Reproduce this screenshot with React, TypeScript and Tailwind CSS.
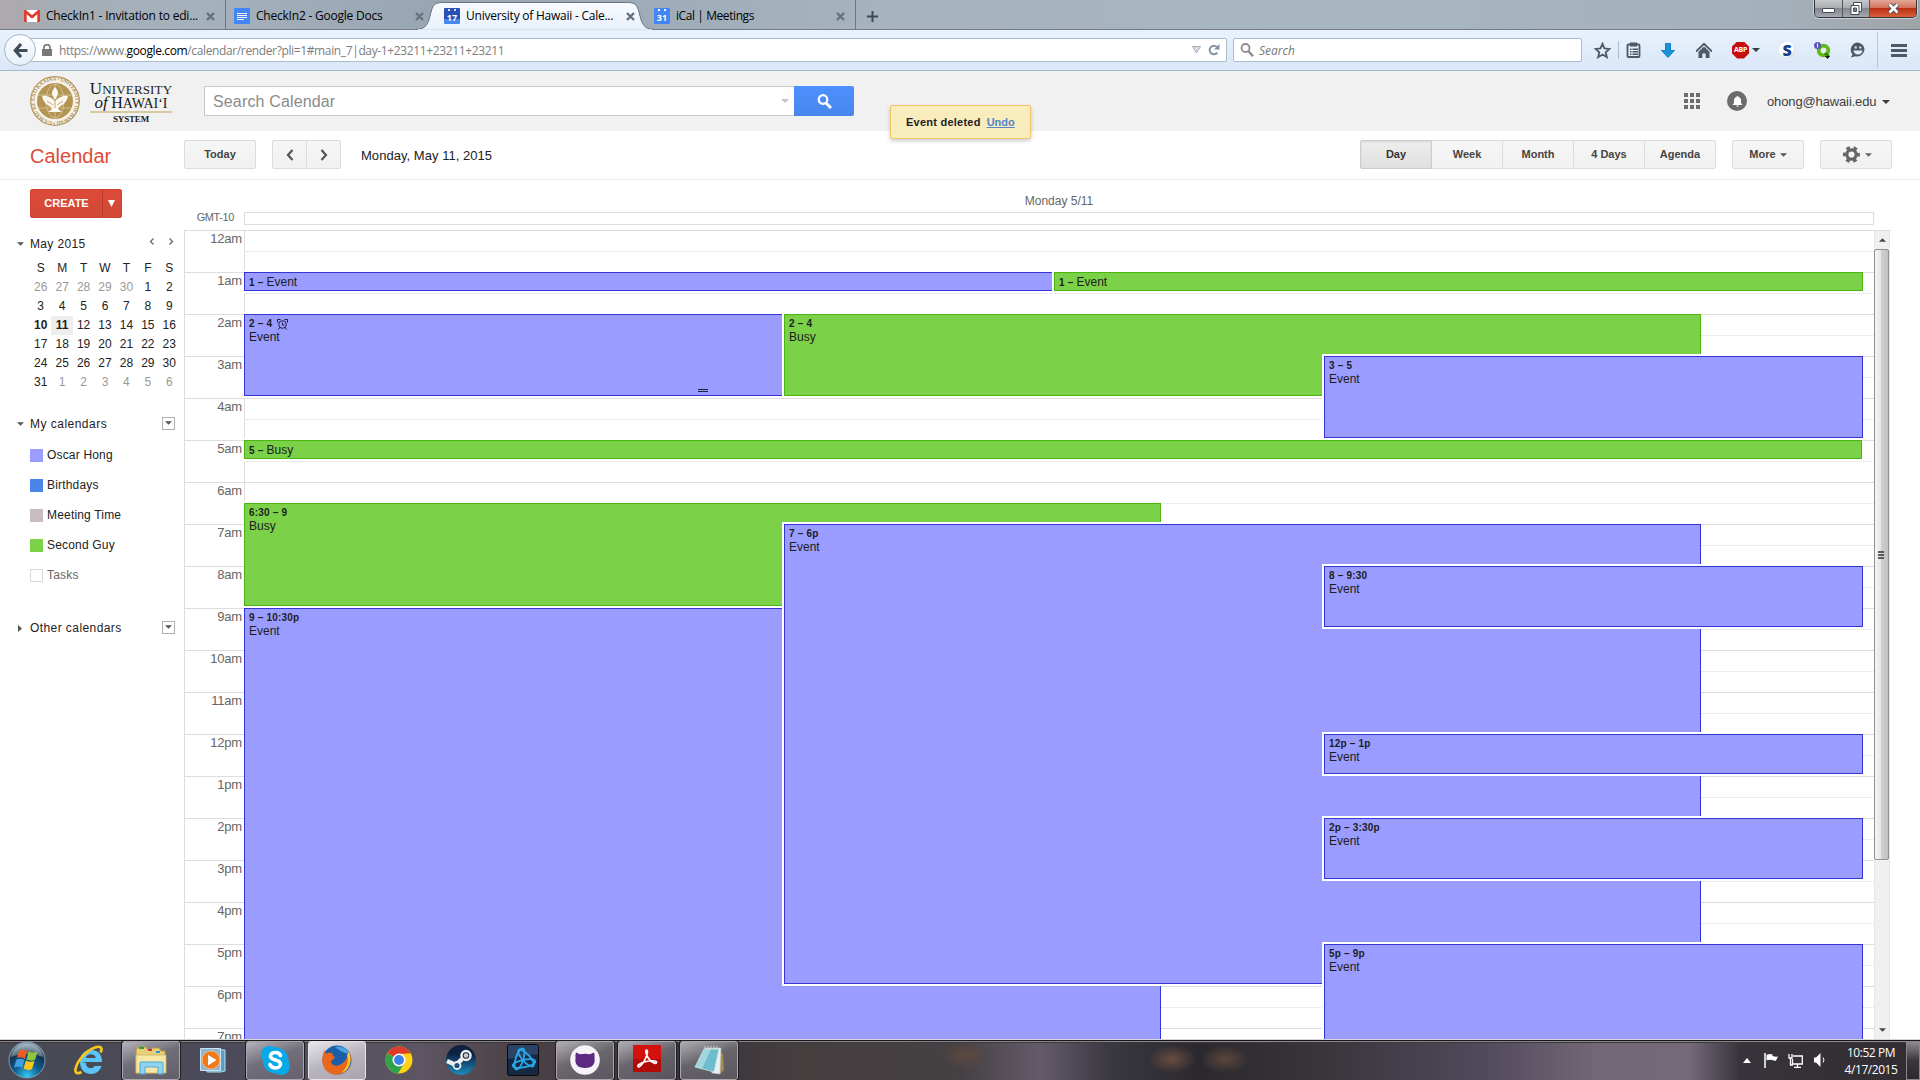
import React from "react";

const HOURS = [
  "12am", "1am", "2am", "3am", "4am", "5am", "6am", "7am", "8am", "9am",
  "10am", "11am", "12pm", "1pm", "2pm", "3pm", "4pm", "5pm", "6pm", "7pm",
];

type Ev = {
  x: number; w: number; start: number; end: number; time: string; title: string;
  green?: boolean; inline?: boolean; alarm?: boolean; grip?: boolean;
};

const EVENTS: Ev[] = [
  { x: 0, w: 809, start: 1, end: 1.5, time: "1 –", title: "Event", inline: true },
  { x: 808, w: 811, start: 1, end: 1.5, time: "1 –", title: "Event", inline: true, green: true },
  { x: 0, w: 539, start: 2, end: 4, time: "2 – 4", title: "Event", alarm: true, grip: true },
  { x: 538, w: 919, start: 2, end: 4, time: "2 – 4", title: "Busy", green: true },
  { x: 1078, w: 541, start: 3, end: 5, time: "3 – 5", title: "Event" },
  { x: 0, w: 1618, start: 5, end: 5.5, time: "5 –", title: "Busy", inline: true, green: true },
  { x: 0, w: 917, start: 6.5, end: 9, time: "6:30 – 9", title: "Busy", green: true },
  { x: 0, w: 917, start: 9, end: 22.5, time: "9 – 10:30p", title: "Event" },
  { x: 538, w: 919, start: 7, end: 18, time: "7 – 6p", title: "Event" },
  { x: 1078, w: 541, start: 8, end: 9.5, time: "8 – 9:30", title: "Event" },
  { x: 1078, w: 541, start: 12, end: 13, time: "12p – 1p", title: "Event" },
  { x: 1078, w: 541, start: 14, end: 15.5, time: "2p – 3:30p", title: "Event" },
  { x: 1078, w: 541, start: 17, end: 21, time: "5p – 9p", title: "Event" },
];

function EventBox({ e }: { e: Ev }) {
  return (
    <div
      className={"absolute border-y-2 border-white " + (e.x > 0 ? "border-l-2" : "")}
      style={{ left: e.x, width: e.w, top: e.start * 42 - 2, height: (e.end - e.start) * 42 + 2 }}
    >
      <div
        className={
          "relative h-full border pl-1 text-[12px] text-[#1d1d1d] " +
          (e.green ? "border-[#4cb610] bg-[#7bd148] " : "border-[#3535dc] bg-[#9a9cff] ") +
          (e.inline ? "pt-0.5" : "pt-0.5")
        }
      >
        {e.inline ? (
          <div className="flex h-[14px] items-center gap-[3px] whitespace-nowrap">
            <span className="pt-px text-[10px] font-bold tracking-[0.2px]">{e.time}</span>
            <span>{e.title}</span>
          </div>
        ) : (
          <>
            <div className="mb-px flex h-[13px] items-center whitespace-nowrap text-[10px] font-bold tracking-[0.2px]">
              {e.time}
              {e.alarm && (
                <svg className="mt-px ml-[5px] size-[11px]" viewBox="0 0 11 11" fill="none" stroke="#1d1d3d">
                  <circle cx="5.500" cy="5.500" r="3.800" />
                  <path d="M5.500 3.500v2.500h2M.5 3.500v-3h3M10.500 3.500v-3h-3M2.800 8.500l-1.500 2M8.200 8.500l1.500 2" />
                </svg>
              )}
            </div>
            <div className="h-[13px] leading-[13px]">{e.title}</div>
          </>
        )}
        {e.grip && <div className="absolute bottom-[3px] left-[453px] h-[3px] w-2.5 border-y border-[#1d1d3d]" />}
      </div>
    </div>
  );
}

function CloseX() {
  return (
    <svg className="size-[9px]" viewBox="0 0 9 9" stroke="#66717c" strokeWidth="2.4">
      <path d="M1 1l7 7M8 1L1 8" />
    </svg>
  );
}

function Caret({ className = "" }: { className?: string }) {
  return (
    <svg className={"h-1 w-2 " + className} viewBox="0 0 8 4" fill="currentColor">
      <path d="M0 0h8L4 4z" />
    </svg>
  );
}

function CalFav({ n, dark }: { n: string; dark?: boolean }) {
  return (
    <div
      className={
        "relative flex size-4 items-center justify-center rounded-[1px] pt-[3px] text-[9px] leading-[11px] font-bold text-white " +
        (dark ? "bg-[linear-gradient(#2a52b4_70%,#4787ee_70%)]" : "bg-[#4285f4]")
      }
    >
      <div className={"absolute inset-x-1 top-px flex justify-between " + (dark ? "text-[#d8dce8]" : "text-white")}>
        <i className="h-0.5 w-0.5 bg-current" />
        <i className="h-0.5 w-0.5 bg-current" />
      </div>
      {n}
    </div>
  );
}

function TabStrip() {
  return (
    <div className="relative flex h-[30px] items-stretch border-b border-[#727d88] bg-[linear-gradient(90deg,#b0a8ac_0,#a3adb5_60px,#a5b1bd_200px,#98a5b2_440px,#a7b4c0_900px,#a8b6c2_1400px,#a4b0ba_1780px,#9fa4a8_1920px)] text-[12px] text-black [font-family:'Open_Sans',sans-serif]">
      <div className="flex w-[226px] items-center border-r border-[#6d7781] pt-[3px] pl-6">
        <svg className="h-3 w-4" viewBox="0 0 16 12">
          <path fill="#fff" d="M1 0h14v12H1z" />
          <path fill="none" stroke="#e0392b" strokeWidth="2.6" d="M1.4 12V1.3L8 7l6.600-5.700V12" />
        </svg>
        <span className="ml-1.5 w-[152px] whitespace-nowrap tracking-[-0.2px]">CheckIn1 - Invitation to edi...</span>
        <span className="ml-[8px]"><CloseX /></span>
      </div>
      <div className="flex w-[210px] items-center pt-[3px] pl-[8px]">
        <div className="flex size-4 flex-col justify-center gap-px rounded-[1px] bg-[#4285f4] px-[3px]">
          <i className="h-px bg-white" /><i className="h-px bg-white" /><i className="h-px bg-white" /><i className="h-px w-[7px] bg-white" />
        </div>
        <span className="ml-1.5 w-[152px] whitespace-nowrap tracking-[-0.22px]">CheckIn2 - Google Docs</span>
        <span className="ml-[7px]"><CloseX /></span>
      </div>
      <div className="relative flex w-[208px] items-center pt-[3px] pl-[8px]">
        <svg className="absolute top-0 -left-[20px] h-[30px] w-[240px]" viewBox="0 0 240 30">
          <defs>
            <linearGradient id="tab" x1="0" y1="0" x2="0" y2="1">
              <stop offset="0" stopColor="#f8fbff" /><stop offset="1" stopColor="#e9f1fc" />
            </linearGradient>
          </defs>
          <path d="M0 29.500C10 29 12 24 14 16 17 4 18 2.500 28 2.500H210C220 2.500 221 4 224 16 226 24 228 29 238 29.500" fill="url(#tab)" stroke="#68747f" />
          <path d="M2 30h234" stroke="#e9f1fc" strokeWidth="1.500" />
        </svg>
        <div className="relative flex items-center">
          <CalFav n="17" dark />
          <span className="ml-1.5 w-[152px] whitespace-nowrap tracking-[-0.24px]">University of Hawaii - Cale...</span>
          <span className="ml-[8px]"><CloseX /></span>
        </div>
      </div>
      <div className="flex w-[212px] items-center border-r border-[#6d7781] pt-[3px] pl-[10px]">
        <CalFav n="31" />
        <span className="ml-1.5 w-[152px] whitespace-nowrap tracking-[-0.42px]">iCal | Meetings</span>
        <span className="ml-[8px]"><CloseX /></span>
      </div>
      <svg className="mt-[11px] ml-[11px] size-[11px]" viewBox="0 0 11 11" stroke="#3f4a54" strokeWidth="2">
        <path d="M5.500 0v11M0 5.500h11" />
      </svg>
      <div className="absolute top-0 right-[3px] flex h-[18px] overflow-hidden rounded-b-[5px] border border-t-0 border-[#33363a] shadow-[0_0_0_1px_#c9d0d6]">
        <div className="flex w-7 items-center justify-center border-r border-[#55595e] bg-[linear-gradient(#c6c8cb,#a9adb2_45%,#84898f_50%,#a2a8ae)]">
          <i className="mt-[3px] h-[5px] w-[13px] rounded-[1px] border border-[#454a55] bg-white" />
        </div>
        <div className="flex w-[27px] items-center justify-center border-r border-[#55595e] bg-[linear-gradient(#c6c8cb,#a9adb2_45%,#84898f_50%,#a2a8ae)]">
          <svg className="h-[13px] w-[13px]" viewBox="0 0 13 13" fill="#fff" stroke="#454a55">
            <path d="M3.500.5h8v9h-8z" /><path d="M1 3.500h8v9H1z" /><path d="M3.500 6h3v3.500h-3z" fill="#7e848c" />
          </svg>
        </div>
        <div className="flex w-[46px] items-center justify-center bg-[linear-gradient(#e2a799,#d2735c_45%,#bb3015_50%,#d9613a)]">
          <svg className="h-[11px] w-[13px]" viewBox="0 0 13 11">
            <path d="M2.500 1.500l8 8M10.500 1.500l-8 8" stroke="#454a55" strokeWidth="4.500" />
            <path d="M2.500 1.500l8 8M10.500 1.500l-8 8" stroke="#fff" strokeWidth="2.600" />
          </svg>
        </div>
      </div>
    </div>
  );
}

function NavBar() {
  return (
    <div className="relative flex h-[41px] items-center border-b border-[#a3bad0] bg-[linear-gradient(#e9f1fc,#dae7f8)] [font-family:'Open_Sans',sans-serif]">
      <div className="absolute top-1 left-1 z-10 flex size-8 items-center justify-center rounded-full border border-[#a5b5c7] bg-[linear-gradient(#fdfeff,#e6effa)]">
        <svg className="size-[15px]" viewBox="0 0 15 15" fill="none" stroke="#3f4c59" strokeWidth="3.200">
          <path d="M8 1L2.300 7.500 8 14M2.500 7.500H14.500" />
        </svg>
      </div>
      <div className="ml-[22px] flex h-6 w-[1205px] items-center rounded-[2px] border border-[#a9bbcd] bg-white text-[12px]">
        <svg className="ml-[19px] h-3 w-2.5" viewBox="0 0 10 12">
          <path d="M0 5h10v7H0z" fill="#777" />
          <path d="M2 6V3.500a3 2.800 0 0 1 6 0V6" fill="none" stroke="#777" strokeWidth="1.600" />
        </svg>
        <span className="mt-0.5 ml-[7px] text-[#7d7d7d] tracking-[-0.370px] whitespace-nowrap">
          https://www.<span className="text-black">google.com</span>/calendar/render?pli=1#main_7|day-1+23211+23211+23211
        </span>
        <svg className="ml-auto h-2 w-[9px]" viewBox="0 0 9 8"><path d="M.5.5h8L4.500 7z" fill="#d8dee6" stroke="#a4aebb" /></svg>
        <svg className="mr-1.5 ml-[7px] h-3 w-3" viewBox="0 0 12 12">
          <path d="M9.300 8.700A4.300 4.300 0 1 1 9 3" fill="none" stroke="#8493a3" strokeWidth="2" /><path d="M11.500 0v5.500H6z" fill="#8493a3" />
        </svg>
      </div>
      <div className="ml-1.5 flex h-6 w-[349px] items-center rounded-[2px] border border-[#a9bbcd] bg-white text-[12px]">
        <svg className="ml-1.5 size-[14px]" viewBox="0 0 14 14" fill="none" stroke="#8c8c8c">
          <circle cx="5.500" cy="5" r="4" strokeWidth="1.800" /><path d="M8.500 8.200l4.500 5" strokeWidth="2.400" />
        </svg>
        <span className="mt-0.5 ml-[5px] text-[#777] italic">Search</span>
      </div>
      <div className="flex items-center text-[#4d5966]">
        <svg className="ml-[12px] size-[17px]" viewBox="0 0 17 17" fill="none" stroke="currentColor" strokeWidth="1.800">
          <path d="M8.500 1.800l2 4.600 5 .5-3.800 3.300 1.200 5-4.400-2.700-4.400 2.700 1.200-5L1.500 6.900l5-.5z" />
        </svg>
        <i className="ml-[7px] h-[18px] w-px bg-[#a9bbcd]" />
        <svg className="ml-[7px] h-4 w-[15px]" viewBox="0 0 15 16">
          <rect x="1.500" y="2.500" width="12" height="12.500" rx="1" fill="none" stroke="currentColor" strokeWidth="1.800" />
          <path d="M4 .5h7v4H4zM4 6.500h1.500V8H4zM6.500 6.500H12V8H6.500zM4 9h1.500v1.500H4zM6.500 9H12v1.500H6.500zM4 11.500h1.500V13H4zM6.500 11.500H12V13H6.500z" fill="currentColor" />
        </svg>
        <svg className="ml-5 h-[15px] w-[14px]" viewBox="0 0 14 15"><path d="M4.500.5h5v7h4L7 14.500.5 7.500h4z" fill="#1a93db" stroke="#1180c6" /></svg>
        <svg className="ml-[21px] h-[15px] w-4" viewBox="0 0 16 15">
          <path d="M0 8.500L8 .8l8 7.700" fill="none" stroke="currentColor" strokeWidth="1.900" /><path d="M2.500 8.700L8 3.600l5.500 5.100V15H9.700v-4.500H6.300V15H2.500z" fill="currentColor" />
        </svg>
        <div className="ml-5 flex size-[17px] items-center justify-center bg-[#c70d0d] text-[7px] font-bold tracking-[-0.3px] text-white [clip-path:polygon(30%_0,70%_0,100%_30%,100%_70%,70%_100%,30%_100%,0_70%,0_30%)]">ABP</div>
        <Caret className="ml-[3px] text-[#333d47]" />
        <div className="ml-[19px] flex size-4 items-center justify-center rounded-full bg-[radial-gradient(circle_at_40%_40%,#fff_55%,#9ea6ae)] text-[16px] leading-none font-extrabold text-[#173f8a]">S</div>
        <svg className="ml-[19px] h-[17px] w-[17px]" viewBox="0 0 17 17">
          <circle cx="9.500" cy="8.500" r="4.800" fill="none" stroke="#5fb814" strokeWidth="3.800" /><path d="M11 11l4 4" stroke="#3d8208" strokeWidth="3" />
          <circle cx="3.500" cy="3.500" r="3.500" fill="#5a55b5" /><path d="M3.500 1.500v4" stroke="#fff" /><path d="M11 14h5l-2.500 3z" fill="#111" />
        </svg>
        <svg className="ml-[19px] size-4" viewBox="0 0 16 16">
          <path d="M8 .5a7.500 7 0 1 1-2.500 13.800L.8 15.500l1.700-3A7.300 7.300 0 0 1 8 .5z" fill="currentColor" />
          <path d="M4.700 4.500h2v2h-2zM9.300 4.500h2v2h-2zM3.500 8.500h9a4.500 4 0 0 1-9 0z" fill="#e2ecf9" />
        </svg>
        <i className="ml-[11px] h-9 w-px bg-[#b6c7da]" />
        <div className="ml-[13px] flex w-4 flex-col gap-0.5">
          <i className="h-[3px] bg-current" /><i className="h-[3px] bg-current" /><i className="h-[3px] bg-current" />
        </div>
      </div>
    </div>
  );
}

function Seal() {
  return (
    <svg className="size-[50px]" viewBox="0 0 50 50">
      <defs><path id="ring" d="M25 45.500a20.500 20.500 0 1 1 .1 0" /></defs>
      <circle cx="25" cy="25" r="24.300" fill="#f7f3ea" stroke="#b5985a" strokeWidth="1.200" />
      <text fontSize="5.200" fontWeight="bold" fill="#a98a4b" fontFamily="Liberation Serif, serif">
        <textPath href="#ring" textLength="127">• UA MAU KE EA O KA AINA • UNIVERSITY OF HAWAII</textPath>
      </text>
      <circle cx="25" cy="25" r="18" fill="#b39452" />
      <g fill="none" stroke="#e6d9b8" strokeWidth=".6">
        <ellipse cx="25" cy="25" rx="9" ry="17" /><path d="M8 19h34M8 32h34M25 8v34" />
      </g>
      <path d="M12 20c5-1 10 2 13 5 3-3 8-6 13-5-1 6-5 9-9 11l-1 2 4 3H18l4-3-1-2c-4-2-8-5-9-11z" fill="#fbf8f0" />
      <path d="M25 24v8M17 25l6 4M33 25l-6 4" stroke="#b39452" strokeWidth=".8" />
      <path d="M25 11c3 3 4 6 2 9l-1 3h-2l-1-3c-2-3-1-5 2-9z" fill="#fbf8f0" />
    </svg>
  );
}

function Header() {
  return (
    <div className="relative flex h-[60px] items-start bg-[#f1f1f1]">
      <div className="mt-[5px] ml-[30px]"><Seal /></div>
      <div className="mt-[10px] ml-[9px] flex w-[84px] flex-col items-center text-[#1a1a1a] [font-family:'Liberation_Serif',serif]">
        <div className="h-[15px] text-[13px] leading-[15px] tracking-[0.150px] whitespace-nowrap"><span className="text-[17px] leading-[15px]">U</span>NIVERSITY</div>
        <div className="h-[14px] text-[14px] leading-[14px] whitespace-nowrap"><i className="text-[17px] leading-[14px]">of</i> <span className="text-[16px] leading-[14px]">H</span>AWAIʻI</div>
        <div className="mt-px h-[2px] w-[82px] bg-[#d9c9a0]" />
        <div className="text-[9px] leading-[13px] font-bold tracking-[-0.150px]">SYSTEM</div>
      </div>
      <div className="mt-[15px] ml-[31px] flex h-[30px] w-[590px] items-center border border-r-0 border-[#c8c8c8] bg-white pl-2 text-[16px] text-[#8a8a8a]">
        <span className="mt-px tracking-[0.150px]">Search Calendar</span>
        <Caret className="mr-[5px] ml-auto text-[#c4c4c4]" />
      </div>
      <div className="mt-[15px] flex h-[30px] w-[60px] items-center justify-center rounded-r-[2px] bg-[linear-gradient(#4d90fe,#4787ed)]">
        <svg className="size-[15px]" viewBox="0 0 15 15" fill="none" stroke="#fff">
          <circle cx="6" cy="5.500" r="4.300" strokeWidth="2.200" /><path d="M9 9l5 5" strokeWidth="2.800" />
        </svg>
      </div>
      <div className="absolute top-[34px] left-[890px] z-20 flex h-[34px] w-[141px] items-center rounded-[2px] border border-[#f0c36d] bg-[#f9edbe] pl-[15px] text-[11px] font-bold text-[#222] shadow-[0_2px_4px_rgba(0,0,0,0.2)]">
        <span className="tracking-[0.240px]">Event deleted</span>
        <span className="ml-[6px] text-[#5384c8] underline">Undo</span>
      </div>
      <div className="mt-[22px] ml-auto grid grid-cols-3 gap-0.5">
        {Array.from({ length: 9 }, (_, i) => <i key={i} className="size-1 bg-[#6c6c6c]" />)}
      </div>
      <div className="mt-5 ml-[27px] flex size-5 items-center justify-center rounded-full bg-[#6c6c6c]">
        <svg className="size-[11px]" viewBox="0 0 11 11" fill="#fff"><path d="M5.500 0a1 1 0 0 1 1 1C8.500 1.500 9 3 9 5v2l1.200 1.500v.5H.8v-.5L2 7V5c0-2 .5-3.500 2.500-4a1 1 0 0 1 1-1zM4.300 9.600h2.400a1.200 1.200 0 0 1-2.400 0z" /></svg>
      </div>
      <span className="mt-[22px] ml-[20px] w-[109px] text-[13px] leading-[18px] tracking-[-0.130px] whitespace-nowrap text-[#404040]">ohong@hawaii.edu</span>
      <Caret className="mt-[29px] mr-[30px] ml-[6px] text-[#404040]" />
    </div>
  );
}

const BTN = "flex h-[29px] items-center justify-center border border-[#dcdcdc] bg-[linear-gradient(#f6f6f6,#f1f1f1)] text-[11px] font-bold text-[#444]";

function Chevron({ d }: { d: string }) {
  return <svg className="mt-px h-3 w-2" viewBox="0 0 8 12" fill="none" stroke="#555" strokeWidth="2.200"><path d={d} /></svg>;
}

function Toolbar() {
  return (
    <div className="flex h-[49px] items-start border-b border-[#ebebeb] pt-[9px]">
      <span className="mt-[1px] ml-[30px] w-[154px] text-[20px] leading-[30px] text-[#dd4b39]">Calendar</span>
      <div className={BTN + " w-[72px] rounded-[2px]"}>Today</div>
      <div className={BTN + " ml-4 w-[35px] rounded-l-[2px]"}><Chevron d="M6.500 1L2 6l4.500 5" /></div>
      <div className={BTN + " -ml-px w-[35px] rounded-r-[2px]"}><Chevron d="M1.500 1L6 6l-4.500 5" /></div>
      <span className="ml-5 text-[13px] leading-[31px] tracking-[0.040px] text-[#222]">Monday, May 11, 2015</span>
      <div className="ml-auto flex">
        <div className="z-10 flex h-[29px] w-[72px] items-center justify-center rounded-l-[2px] border border-[#ccc] bg-[linear-gradient(#eee,#e0e0e0)] text-[11px] font-bold text-[#333] shadow-[inset_0_1px_2px_rgba(0,0,0,0.1)]">Day</div>
        <div className={BTN + " -ml-px w-[72px]"}>Week</div>
        <div className={BTN + " -ml-px w-[72px]"}>Month</div>
        <div className={BTN + " -ml-px w-[72px]"}>4 Days</div>
        <div className={BTN + " -ml-px w-[72px] rounded-r-[2px]"}>Agenda</div>
      </div>
      <div className={BTN + " ml-4 w-[72px] gap-1 rounded-[2px]"}>More <Caret className="w-[7px] text-[#555]" /></div>
      <div className={BTN + " mr-7 ml-4 w-[72px] gap-[5px] rounded-[2px] pl-0.5"}>
        <svg className="size-[17px]" viewBox="0 0 17 17" fill="none" stroke="#666">
          <circle cx="8.500" cy="8.500" r="4.700" strokeWidth="3.200" />
          <circle cx="8.500" cy="8.500" r="7" strokeWidth="3" strokeDasharray="3.670 3.660" strokeDashoffset="1.830" />
        </svg>
        <svg className="h-1 w-[7px]" viewBox="0 0 8 4" fill="#666"><path d="M0 0h8L4 4z" /></svg>
      </div>
    </div>
  );
}

const WEEKS = [
  [26, 27, 28, 29, 30, 1, 2],
  [3, 4, 5, 6, 7, 8, 9],
  [10, 11, 12, 13, 14, 15, 16],
  [17, 18, 19, 20, 21, 22, 23],
  [24, 25, 26, 27, 28, 29, 30],
  [31, 1, 2, 3, 4, 5, 6],
];

const CALS = [
  { name: "Oscar Hong", color: "bg-[#9a9cff]" },
  { name: "Birthdays", color: "bg-[#4986e7]" },
  { name: "Meeting Time", color: "bg-[#cabdbf]" },
  { name: "Second Guy", color: "bg-[#7bd148]" },
  { name: "Tasks", color: "border border-[#d8d8d8] bg-white" },
];

function MenuBox() {
  return (
    <div className="mr-[9px] mb-0.5 ml-auto flex size-[13px] items-center justify-center border border-[#b0b0b0] text-[#555]">
      <Caret className="w-[7px]" />
    </div>
  );
}

function Sidebar() {
  return (
    <div className="flex w-[184px] shrink-0 flex-col text-[12px] text-[#222]">
      <div className="mt-[9px] ml-[30px] flex h-[29px] w-[92px] rounded-[2px] border border-[#d0402f] bg-[linear-gradient(#dd4b39,#d14836)] text-[11px] font-bold text-white">
        <span className="flex w-[71px] items-center justify-center">CREATE</span>
        <span className="flex flex-1 items-center justify-center border-l border-[#b93a2a] pr-px">
          <svg className="h-[7px] w-[7px]" viewBox="0 0 7 7" fill="#fff"><path d="M0 0h7L3.500 7z" /></svg>
        </span>
      </div>
      <div className="mt-[17px] flex h-[18px] items-center pl-[17px]">
        <Caret className="w-[7px] text-[#555]" />
        <span className="ml-1.5 tracking-[0.350px]">May 2015</span>
        <svg className="mr-[10px] mb-1.5 ml-auto h-[7px] w-[25px]" viewBox="0 0 25 7" fill="none" stroke="#666" strokeWidth="1.300">
          <path d="M4.500.5l-3 3 3 3M20.500.5l3 3-3 3" />
        </svg>
      </div>
      <div className="mt-[6px] ml-[30px] grid w-[150px] grid-cols-7 text-center leading-[19px]">
        {["S", "M", "T", "W", "T", "F", "S"].map((d, i) => <span key={i}>{d}</span>)}
        {WEEKS.flatMap((w, r) =>
          w.map((d, c) => {
            const dim = (r === 0 && d > 20) || (r === 5 && d < 20);
            return (
              <span
                key={r + "-" + c}
                className={
                  (dim ? "text-[#999] " : "") + (r === 2 && c < 2 ? "font-bold " : "") + (r === 2 && c === 1 ? "bg-[#eee]" : "")
                }
              >
                {d}
              </span>
            );
          })
        )}
      </div>
      <div className="mt-[23px] flex h-[18px] items-center pl-[17px]">
        <Caret className="w-[7px] text-[#555]" />
        <span className="ml-1.5 tracking-[0.480px]">My calendars</span>
        <MenuBox />
      </div>
      <div className="mt-[7px] flex flex-col pl-[30px]">
        {CALS.map((c) => (
          <div key={c.name} className={"flex h-[30px] items-center " + (c.name === "Tasks" ? "text-[#666]" : "")}>
            <i className={"size-[13px] " + c.color} />
            <span className="ml-1 tracking-[0.180px]">{c.name}</span>
          </div>
        ))}
      </div>
      <div className="mt-[29px] flex h-[18px] items-center pl-[18px]">
        <svg className="h-[7px] w-1" viewBox="0 0 4 7" fill="#555"><path d="M0 0l4 3.500L0 7z" /></svg>
        <span className="ml-2 tracking-[0.420px]">Other calendars</span>
        <MenuBox />
      </div>
    </div>
  );
}

function ScrollBar() {
  return (
    <div className="relative flex w-4 shrink-0 flex-col items-center border-x border-[#e6e6e6] bg-[#f0f0f0]">
      <div className="flex h-[18px] items-center"><svg className="h-1 w-[7px]" viewBox="0 0 8 4" fill="#444"><path d="M0 4h8L4 0z" /></svg></div>
      <div className="-ml-px flex h-[611px] w-[15px] items-center justify-center rounded-[2px] border border-[#919191] bg-[linear-gradient(90deg,#f5f5f5,#e6e6e6_45%,#cfcfd2_50%,#c0c1c4)]">
        <div className="mr-px -mb-px flex w-1.5 flex-col gap-px">
          <i className="h-0.5 bg-[#5c5c5c]" /><i className="h-0.5 bg-[#5c5c5c]" /><i className="h-0.5 bg-[#5c5c5c]" />
        </div>
      </div>
      <div className="mt-auto flex h-[18px] items-center"><Caret className="w-[7px] text-[#444]" /></div>
    </div>
  );
}

function DayView() {
  return (
    <div className="flex w-[1707px] flex-col">
      <div className="h-8 pt-[12px] pr-[17px] pl-[60px] text-center text-[12px] leading-[18px] text-[#666]">Monday 5/11</div>
      <div className="flex h-[18px] items-start">
        <span className="w-[60px] pr-[10px] text-right text-[11px] leading-[11px] tracking-[-0.400px] text-[#666]">GMT-10</span>
        <div className="h-[13px] w-[1630px] border border-[#ddd]" />
      </div>
      <div className="flex h-[809px] overflow-hidden border-t border-[#ddd]">
        <div className="h-[808px] w-[60px] overflow-hidden border-l border-[#ddd] text-right text-[13px] leading-[15px] tracking-[-0.200px] text-[#666]">
          {HOURS.map((h) => <div key={h} className="h-[42px] border-b border-[#ddd] pr-[2px]">{h}</div>)}
        </div>
        <div className="relative h-[808px] w-[1630px] overflow-hidden">
          <div className="border-l border-[#ddd]">
            {HOURS.map((h) => (
              <div key={h} className="h-[42px] border-b border-[#ddd] pt-5"><div className="ml-px border-t border-dotted border-[#ddd]" /></div>
            ))}
          </div>
          <div className="absolute inset-x-0 -top-px">
            {EVENTS.map((e, i) => <EventBox key={i} e={e} />)}
          </div>
        </div>
        <ScrollBar />
      </div>
    </div>
  );
}

function Slot({ children, open, bright }: { children?: React.ReactNode; open?: boolean; bright?: boolean }) {
  return (
    <div
      className={
        "mx-0.5 flex h-[39px] w-[58px] items-center justify-center rounded-[3px] " +
        (bright
          ? "border border-[#e6e4ea] bg-[linear-gradient(160deg,#e9e7ec,#b9b5bf_50%,#a9a3ae)]"
          : open
            ? "border border-[#a9a7ad] bg-[linear-gradient(160deg,rgba(215,215,220,0.75),rgba(140,138,146,0.55)_45%,rgba(120,115,124,0.500))] shadow-[0_0_0_1px_#1d1d22]"
            : "")
      }
    >
      {children}
    </div>
  );
}

function Taskbar() {
  return (
    <div className="relative flex h-[41px] items-center border-t border-[#d6d6d6] bg-[#3b373d] shadow-[inset_0_1px_0_#17171a,inset_0_2px_0_#8a878c]">
      <div className="absolute inset-x-0 top-[3px] bottom-0 bg-[radial-gradient(ellipse_at_75px_40px,#17141a,transparent_70px),radial-gradient(ellipse_24px_14px_at_1172px_16px,#6a4c40,transparent),radial-gradient(ellipse_24px_14px_at_1225px_16px,#5d463c,transparent),radial-gradient(ellipse_24px_14px_at_965px_12px,#5d4a40,transparent),linear-gradient(90deg,#494955_0,#4b4a58_220px,#5d5562_420px,#4b4246_520px,#37333a_680px,#463f40_800px,#454043_960px,#645b6a_1040px,#3a3840_1110px,#2b292e_1200px,#3a363c_1330px,#50495a_1480px,#736878_1600px,#746979_1690px,#38343b_1740px,#302c31_1920px)]" />
      <div className="relative flex w-full items-center">
        <div className="flex w-[58px] justify-center pr-1">
          <svg className="size-[38px]" viewBox="0 0 38 38">
            <defs>
              <radialGradient id="orb" cx=".5" cy=".95" r=".9"><stop offset="0" stopColor="#35c8f3" /><stop offset=".4" stopColor="#0e5f94" /><stop offset=".75" stopColor="#15324d" /><stop offset="1" stopColor="#8aa0b2" /></radialGradient>
            </defs>
            <circle cx="19" cy="19" r="18" fill="url(#orb)" stroke="#7f9cb0" />
            <path d="M3 16C5 7 12 3 19 3s14 4 16 13c-10-4-22-4-32 0z" fill="#fff" opacity=".3" />
            <path d="M11 10c3-2 5-1 8 0l-2 8c-3-2-5-2-8-1z" fill="#ee5a24" />
            <path d="M20.500 10.500c3 1.500 6 1.500 9 0l-2.500 8.500c-3 1-5 1-8.500-.5z" fill="#8cc63e" />
            <path d="M8.500 18.500c3-1 5-1 8 .5l-2.500 8c-2-1.500-5-1.500-8-.5z" fill="#3f9fe0" />
            <path d="M18 19.500c3 1.500 6 1.500 8.500.5L24 28c-3 1.500-5.500 1-8.500-.5z" fill="#fdc718" />
          </svg>
        </div>
        <Slot>
          <svg className="h-[34px] w-[34px]" viewBox="0 0 34 34" fill="none">
            <path d="M10 19H30C30 9 24 7 19 7 12 7 8 12 8 19s4 12 11 12c5 0 9-3 10.500-8h-7c-1 1.500-2 2.200-4 2.200-3 0-4.500-2.200-4.500-5.200M14 15c.5-2.500 2-3.700 4.800-3.700S23.500 13 23.800 15z" fill="#5cc5f5" fillRule="evenodd" />
            <path d="M28.500 9.500C31 5 29 2.500 23 4.500 14 7.500 5 18 3.500 26c-.8 4.500 2.500 5 6 3" stroke="#f8c81c" strokeWidth="2.600" />
          </svg>
        </Slot>
        <Slot open>
          <svg className="h-[32px] w-[34px]" viewBox="0 0 34 32">
            <path d="M2 6l2-3h8l2 3h3l1-2h7l2 3h4v22H2z" fill="#e9cf78" stroke="#b79843" />
            <path d="M2 11h30v18H2z" fill="#f6e7a6" stroke="#ceb262" strokeWidth=".8" />
            <path d="M5 3h5v2H5z" fill="#2a9d3a" /><path d="M14 5h4v2h-4z" fill="#c73b2d" /><path d="M22 7h4v2h-4z" fill="#2f8fd0" />
            <path d="M6 30V19q0-1 1-1h21q1 0 1 1v11h-5v-7H11v7z" fill="#8fd3ec" stroke="#4fa8cf" />
          </svg>
        </Slot>
        <Slot>
          <svg className="h-[28px] w-[28px]" viewBox="0 0 28 28">
            <path d="M8 3l18 1v21l-4 1H8z" fill="#5b9dc9" stroke="#b5dcf0" />
            <path d="M1.500 2.500h20v22h-20z" fill="#8fb8d4" stroke="#cde5f2" />
            <circle cx="12" cy="14" r="9" fill="#ee7a1c" stroke="#f7b679" /><path d="M9 9l8.500 5L9 19.500z" fill="#fff" />
          </svg>
        </Slot>
        <Slot open>
          <svg className="size-[31px]" viewBox="0 0 31 31">
            <path d="M9 1c3 0 5 .6 6 1.500C22 2 29 8 28.500 16c3 6 0 14-7 14-2 0-4-.6-5-1.500C9 29 2.500 23 3 15.500-1 9 2 1 9 1z" fill="#08a9e9" />
            <path d="M20.500 10.500C19.500 8 17.500 7.500 15.500 7.500c-3 0-5 1.500-5 3.800C10.500 16 20.500 14 20.500 19c0 2.500-2.200 4-5 4-2.500 0-4.500-1-5.500-3.500" fill="none" stroke="#fff" strokeWidth="3.600" strokeLinecap="round" />
          </svg>
        </Slot>
        <Slot bright>
          <svg className="size-[32px]" viewBox="0 0 32 32">
            <circle cx="16" cy="16" r="14.500" fill="#1c5fa8" /><path d="M14 3c6-2 13 2 15 7-5-1-9-2-15-7z" fill="#47a3dd" />
            <path d="M29 10c3 10-3 20-13 20.500C6 31 0 23 1.500 13 2 10 3 7 4 6c0 2 .5 3 1 3.500 2-1 5-1 7 0-1 2 0 3 2 3.500-1 3-4 3-4 5 1 4 6 5 10 2 4-2 7-6 7-12 1 1 1.500 2 2 2z" fill="#e9661c" />
            <path d="M28 8c4 9 0 19-8 21 6-5 8-12 6-18z" fill="#fbc42c" />
          </svg>
        </Slot>
        <Slot>
          <svg className="size-[28px]" viewBox="0 0 28 28">
            <circle cx="14" cy="14" r="13.500" fill="#fdd116" />
            <path d="M14 14L2.300 7.250A13.500 13.500 0 0 1 25.700 7.250L14 8z" fill="#dd3b2c" />
            <path d="M14 14L2.300 7.250A13.500 13.500 0 0 0 13 27.500l6-10z" fill="#2fa24b" />
            <circle cx="14" cy="14" r="6.500" fill="#fff" /><circle cx="14" cy="14" r="5" fill="#3c81e8" />
          </svg>
        </Slot>
        <Slot>
          <svg className="size-[30px]" viewBox="0 0 30 30">
            <defs><linearGradient id="steam" x1="0" y1="0" x2="0" y2="1"><stop offset=".3" stopColor="#0d2244" /><stop offset="1" stopColor="#1d8bbd" /></linearGradient></defs>
            <circle cx="15" cy="15" r="15" fill="url(#steam)" />
            <path d="M1 16l9 4 6-6" fill="none" stroke="#eee" strokeWidth="4.500" />
            <circle cx="20" cy="10.500" r="4.500" fill="#0d2244" stroke="#eee" strokeWidth="2.500" /><circle cx="20" cy="10.500" r="2.300" fill="#ccc" />
            <circle cx="11" cy="20.500" r="3.500" fill="#1b4f80" stroke="#eee" strokeWidth="1.800" />
          </svg>
        </Slot>
        <Slot>
          <svg className="size-[32px]" viewBox="0 0 32 32" fill="none">
            <rect x=".5" y=".5" width="31" height="31" rx="2" fill="#172942" stroke="#06080c" />
            <path d="M1 1h30v9L1 15z" fill="#39577f" opacity=".6" />
            <g stroke="#27a9ea" strokeWidth="1.800">
              <ellipse cx="17" cy="19.500" rx="11.500" ry="3.800" transform="rotate(-12 17 19.500)" />
              <ellipse cx="19" cy="14" rx="11" ry="3.800" transform="rotate(48 19 14)" />
              <ellipse cx="12.500" cy="15" rx="11" ry="3.800" transform="rotate(108 12.500 15)" />
            </g>
          </svg>
        </Slot>
        <Slot open>
          <svg className="size-[30px]" viewBox="0 0 30 30">
            <circle cx="15" cy="15" r="14.800" fill="#f4f3f8" />
            <path d="M6 7.500l4 1.800q5-1 10 0l4-1.800q1 3 .5 5.500c1 6-2 10-9.500 10S4.500 19 5.500 13Q5 10 6 7.500z" fill="#5b2a80" />
          </svg>
        </Slot>
        <Slot open>
          <svg className="-mt-1 h-[27px] w-[28px]" viewBox="0 0 28 27">
            <path d="M0 0h28v27H0z" fill="#d4110d" /><path d="M0 14h28v13H0z" fill="#a50807" opacity=".7" />
            <path d="M13.500 5c2 0 .5 5-1 8.500C10 19 6 23 5 21.500c-1.500-2 6-5 11-5.500 4-.5 8 0 7.500 1.500-.5 2-5 0-7.500-3.500C13 10 12 5 13.500 5z" fill="none" stroke="#fff" strokeWidth="1.700" />
          </svg>
        </Slot>
        <Slot open>
          <svg className="size-[31px]" viewBox="0 0 31 31">
            <path d="M25 5l4 4 1 16-4 4z" fill="#a98b49" /><path d="M11 3h16l-1 26-8-1z" fill="#e6eeee" stroke="#b5c3c5" strokeWidth=".6" />
            <path d="M10 4h15l-5 23L1 22z" fill="#6cbccc" stroke="#cfe9ee" strokeWidth=".7" /><path d="M10 4h7L8 24l-7-2z" fill="#b7e1e7" opacity=".7" />
            <path d="M11 1v4M14 1v4M17 1v4M20 1v4M23 1v4" stroke="#ccc" />
          </svg>
        </Slot>
        <div className="ml-auto flex items-center text-white">
          <svg className="mt-px h-[5px] w-2" viewBox="0 0 8 5" fill="#fff"><path d="M0 5h8L4 0z" /></svg>
          <svg className="ml-[13px] h-[15px] w-[15px]" viewBox="0 0 15 15"><path d="M1 0v15" stroke="#fff" strokeWidth="1.500" /><path d="M2.500 2q3-1.500 6-.5v1.500q3 1 5.500.5-1 2-2 4-2 .8-3.500-.5-3-.8-6 .3z" fill="#fff" /></svg>
          <svg className="ml-[9px] h-[15px] w-[15px]" viewBox="0 0 15 15" fill="none" stroke="#fff" strokeWidth="1.300"><path d="M5 3h9.300v8H4.500V6M1 1v4h3V1M2.500 5v7H5M9.500 11v3M6 14.300h7" /></svg>
          <svg className="ml-[11px] h-[14px] w-[13px]" viewBox="0 0 13 14"><path d="M0 4.500h2L6.500 0v14L2 9.500H0z" fill="#fff" /><path d="M9 4.500q2 2.500 0 5" fill="none" stroke="#fff" /></svg>
          <div className="mt-0.5 ml-[17px] flex w-[54px] flex-col items-center text-[12px] leading-[17px] tracking-[-0.450px] whitespace-nowrap [font-family:'Open_Sans',sans-serif]">
            <span>10:52 PM</span>
            <span>4/17/2015</span>
          </div>
          <div className="ml-[8px] h-[39px] w-[14px] border border-[#8a878c] bg-[linear-gradient(#8d8a90,#3a373c_50%,#2c292d)]" />
        </div>
      </div>
    </div>
  );
}

export default function App() {
  return (
    <div className="flex h-[1080px] w-[1920px] flex-col overflow-hidden bg-white [font-family:'Liberation_Sans',Arial,sans-serif]">
      <TabStrip />
      <NavBar />
      <Header />
      <Toolbar />
      <div className="flex h-[859px]">
        <Sidebar />
        <DayView />
      </div>
      <Taskbar />
    </div>
  );
}
